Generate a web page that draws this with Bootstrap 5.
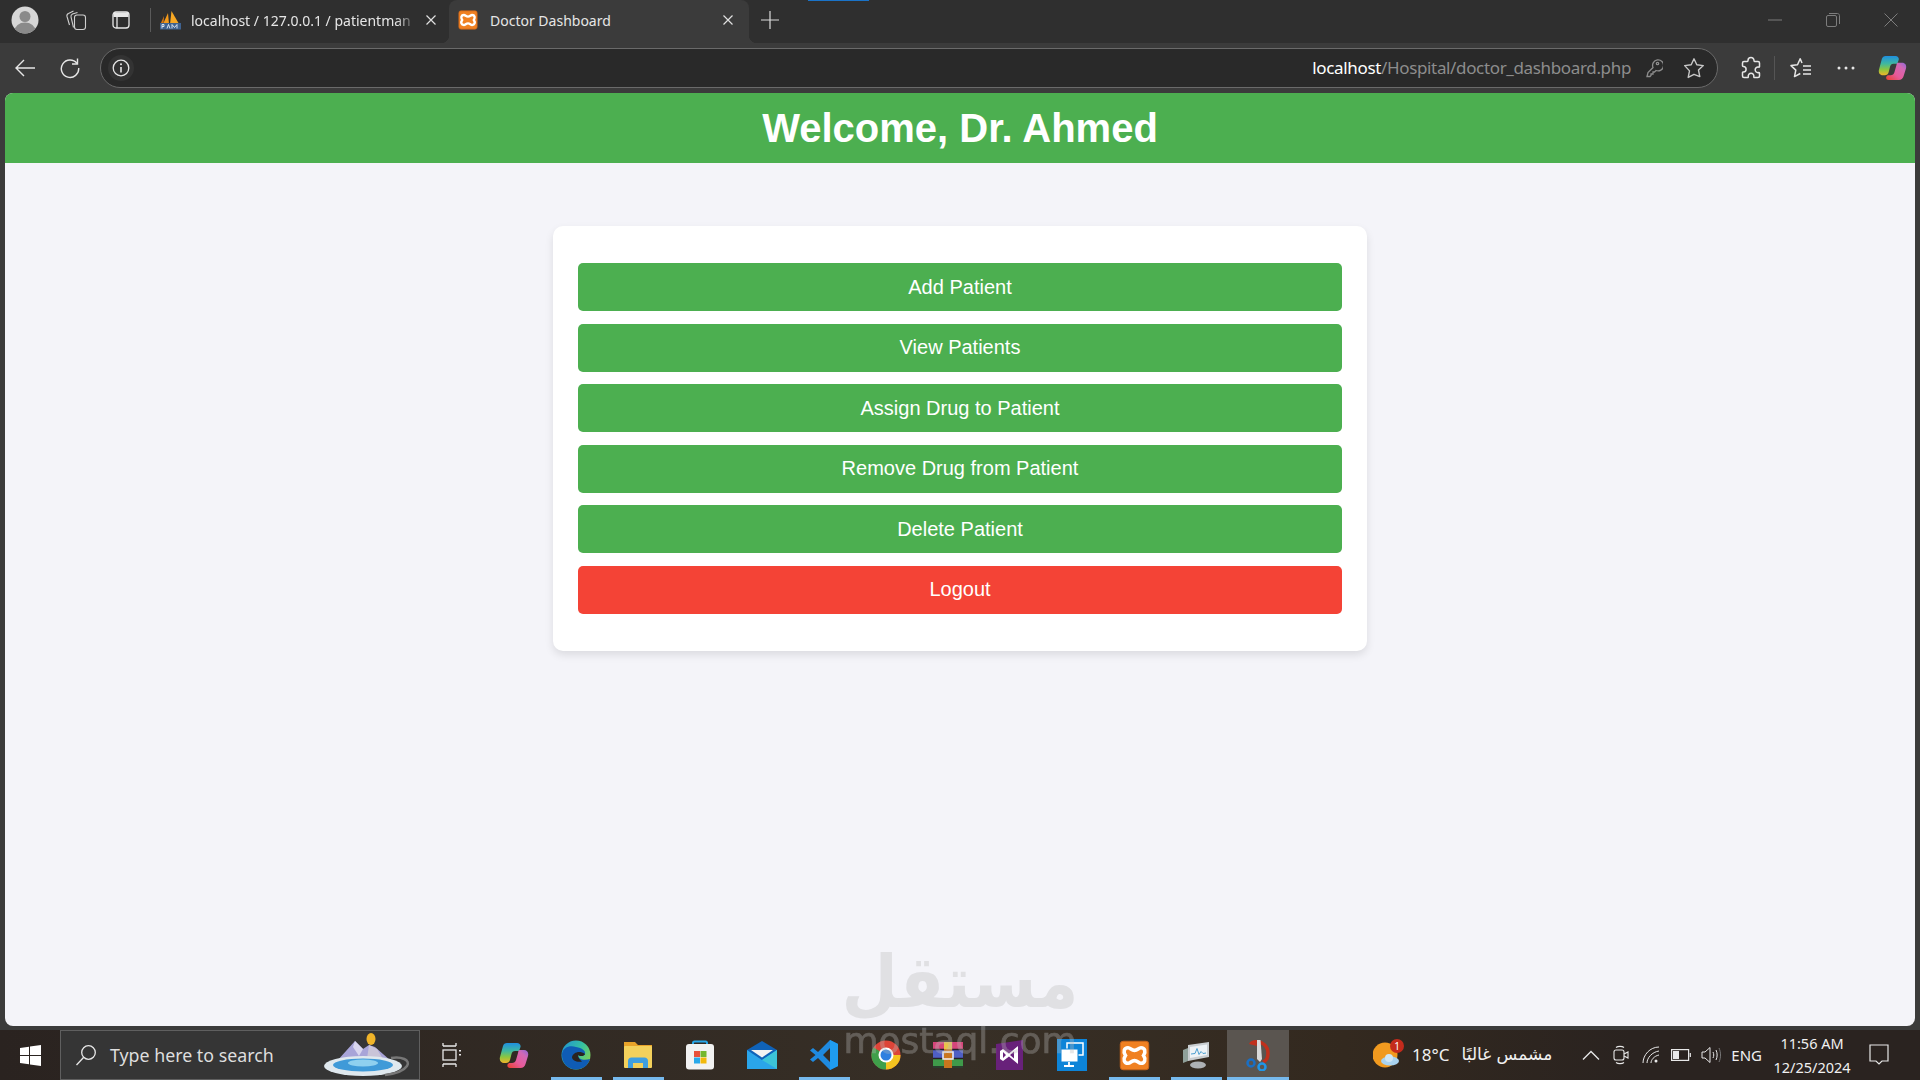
<!DOCTYPE html>
<html lang="en">
<head>
  <meta charset="UTF-8" />
  <meta name="viewport" content="width=device-width, initial-scale=1" />
  <title>Doctor Dashboard</title>
  <link href="https://cdn.jsdelivr.net/npm/bootstrap@5.3.0/dist/css/bootstrap.min.css" rel="stylesheet" />
  <style>
    html, body { height: 100%; }
    body { overflow: hidden; background: #3b3b3b; font-family: "Liberation Sans", Arial, sans-serif; }
    .shell { height: 100vh; position: relative; }
    .ui-font { font-family: "Noto Sans", "Open Sans", sans-serif; }

    /* browser chrome */
    .tabstrip { height: 43px; background: #2f2f2f; color: #e6e6e6; font-size: 14px; padding-left: 11px; padding-bottom: 3px; }
    .strip-ico { width: 45px; }
    .strip-ico-first { width: 28px; margin-right: 14px; }
    .tab-sep { width: 1px; height: 24px; background: #5a5a5a; margin: 0 9px 0 7px; }
    .tabitem { height: 43px; padding-bottom: 3px; margin-bottom: -3px; }
    .tab-one { width: 289px; padding-right: 12px; }
    .tab-two { width: 300px; background: #3b3b3b; border-radius: 8px 8px 0 0; padding-left: 9px; padding-right: 11px; position: relative; }
    .tab-two::before, .tab-two::after { content: ""; position: absolute; bottom: 0; width: 8px; height: 8px; }
    .tab-two::before { left: -8px; background: radial-gradient(circle at 0 0, #2f2f2f 8px, #3b3b3b 8.500px); }
    .tab-two::after { right: -8px; background: radial-gradient(circle at 100% 0, #2f2f2f 8px, #3b3b3b 8.500px); }
    .tab-title { flex: 1; white-space: nowrap; margin-left: 12px; }
    .tab-one .tab-title { margin-left: 10px; -webkit-mask-image: linear-gradient(90deg, #000 205px, transparent 226px); mask-image: linear-gradient(90deg, #000 205px, transparent 226px); }
    .newtab { width: 42px; }
    .winbtn { width: 58px; }
    .winctl { margin-left: auto; }
    .loadbar { position: absolute; top: 0; left: 808px; width: 61px; height: 1px; background: #1a73c8; }
    .toolbar { height: 50px; background: #3b3b3b; padding-left: 2px; }
    .tool-ico { width: 45px; }
    .tool-ico-wide { width: 48px; }
    .tool-ico-ext { width: 46px; }
    .addressbar { width: 1618px; height: 40px; margin-left: 8px; background: #292929; border: 1px solid #6a6a6a; border-radius: 20px; padding: 0 3px 0 7px; }
    .info-ico { width: 26px; height: 26px; border-radius: 50%; background: #333; }
    .urlbox { margin-left: auto; font-size: 17px; color: #8d8d8d; margin-right: 3px; letter-spacing: -.35px; }
    .urlbox b { font-weight: 400; color: #fff; }
    .addr-ico { width: 40px; }
    .toolbar-right { margin-left: 10px; }
    .tool-sep { width: 1px; height: 24px; background: #555; margin-right: 2px; }

    /* page inside the browser */
    .viewport { flex: 1; margin: 0 5px 4px; background: #f4f4f9; border-radius: 8px; overflow: hidden; }
    .page-head { height: 70px; background: #4caf50; color: #fff; }
    .page-head h1 { font-size: 40px; font-weight: 700; margin: 0; }
    .menu-card { width: 814px; margin: 63px auto 0; padding: 37px 25px; background: #fff; border-radius: 10px; box-shadow: 0 4px 8px rgba(0,0,0,.1); gap: 12.5px; }
    .menu-btn { height: 48px; border: 0; border-radius: 5px; background: #4caf50; color: #fff; font-size: 20px; padding: 0 0 1px; }
    .menu-btn:hover { background: #4caf50; color: #fff; }
    .menu-btn-red, .menu-btn-red:hover { background: #f44336; }

    /* windows taskbar */
    .taskbar { height: 50px; background: linear-gradient(90deg, #2a2320, #372f26 50%, #33291f 70%, #2a2320 85%); color: #f0f0f0; }
    .startbtn { width: 60px; }
    .searchbox { width: 360px; height: 50px; margin-right: 1px; background: #353535; border: 1px solid #5f5f5f; padding-left: 14px; font-size: 17.800px; color: #dedede; }
    .searchbox span { margin-left: 13px; }
    .search-art { margin-left: auto; margin-right: 6px; }
    .taskcell { width: 62px; height: 50px; position: relative; }
    .taskcell.open::after { content: ""; position: absolute; left: 6px; right: 5px; bottom: 0; height: 3px; background: #76b9ed; }
    .taskcell.active { background: #5a5550; }
    .taskcell.active::after { left: 0; right: 0; }
    .tray { margin-left: auto; margin-right: 17px; font-size: 17px; }
    .tray-arabic { margin: 0 24px 0 12px; font-size: 17px; font-family: "DejaVu Sans", sans-serif; }
    .tray-ico { width: 30px; }
    .tray-lang { font-size: 15px; margin: 0 7px 0 5px; }
    .tray-clock { font-size: 14.500px; line-height: 24px; text-align: center; width: 86px; }
    .tray-note { width: 48px; }
    .notif-dot { position: absolute; top: -2px; right: -3px; width: 14px; height: 14px; border-radius: 50%; background: #c42b1c; color: #fff; font-size: 10px; line-height: 14px; text-align: center; }
    .weather { width: 28px; height: 28px; margin-right: 11px; }

    /* site watermark */
    .watermark { position: absolute; left: 0; right: 0; top: 942px; text-align: center; color: rgb(186,186,186); opacity: .34; pointer-events: none; font-family: "DejaVu Sans", sans-serif; }
    .wm-ar { font-weight: 700; font-size: 72px; line-height: 80px; transform: scaleX(.9); }
    .wm-en { font-size: 36px; line-height: 38px; -webkit-text-stroke: .7px rgb(186,186,186); }
  </style>
</head>
<body>
<svg width="0" height="0" class="position-absolute">
  <defs>
    <linearGradient id="copA" x1="0" y1="0" x2="0" y2="1"><stop offset="0" stop-color="#1f8fe0" /><stop offset=".4" stop-color="#3fb8a0" /><stop offset=".7" stop-color="#8cc63f" /><stop offset="1" stop-color="#f0b429" /></linearGradient>
    <linearGradient id="copB" x1="0" y1="1" x2="1" y2="0"><stop offset="0" stop-color="#e8402a" /><stop offset=".4" stop-color="#e85a9a" /><stop offset=".75" stop-color="#d268b4" /><stop offset="1" stop-color="#8a68d8" /></linearGradient>
    <symbol id="xampp" viewBox="0 0 24 24">
      <rect x="1" y="1" width="22" height="22" rx="2.500" fill="#f08122" stroke="#c8641a" stroke-width=".8" />
      <path d="M7 6C9 6 9.500 8 12 8S15 6 17 6C20 6 21 9 19 12C21 15 20 18 17 18C15 18 14.500 16 12 16S9 18 7 18C4 18 3 15 5 12C3 9 4 6 7 6Z" fill="none" stroke="#fff" stroke-width="2.800" />
    </symbol>
    <symbol id="copilot" viewBox="0 0 30 27">
      <path d="M8 1h10c2.500 0 4 2 3.500 4L20 9h-4c-2 0-3 1-3.500 3L11 18c-.5 2-2 3-4 3H5C2 21 0 18.500 1 15L4 4c.5-2 2-3 4-3z" fill="url(#copA)" />
      <path d="M20 8h5c3 0 5 2.500 4 6l-2.500 8c-.7 2.500-2.500 4-5 4H11c-2 0-3-1.500-2.500-3.500L10 21h3c2 0 3.500-1 4-3l2-7c.3-1.500.5-2.500 1-3z" fill="url(#copB)" />
    </symbol>
  </defs>
</svg>

<div class="shell d-flex flex-column">
  <div class="loadbar"></div>

  <!-- tab strip -->
  <div class="tabstrip d-flex align-items-center ui-font">
    <div class="strip-ico-first d-flex justify-content-center">
      <svg width="28" height="28" viewBox="0 0 28 28"><defs><clipPath id="av"><circle cx="14" cy="14" r="13.500" /></clipPath></defs><circle cx="14" cy="14" r="13.500" fill="#d6d6d6" /><g clip-path="url(#av)"><circle cx="14" cy="10.500" r="5.500" fill="#8a8a8a" /><ellipse cx="14" cy="25" rx="10.500" ry="8.500" fill="#8a8a8a" /></g></svg>
    </div>
    <div class="strip-ico d-flex justify-content-center">
      <svg width="22" height="22" viewBox="0 0 22 22" fill="none" stroke="#cfcfcf" stroke-width="1.100"><rect x="9.500" y="6" width="11" height="14.500" rx="2.500" /><path d="M8.500 18.500L6 8c-.3-1.500.3-2.500 1.500-3l5-1.500" /><path d="M4.500 16L2 7.500C1.600 6 2.200 5 3.500 4.500L8.500 2" /></svg>
    </div>
    <div class="strip-ico d-flex justify-content-center">
      <svg width="18" height="18" viewBox="0 0 18 18" fill="none" stroke="#e8e8e8" stroke-width="1.300"><rect x="1" y="1" width="16" height="16" rx="3" /><path d="M1.500 1.500h15v4.500h-15z" fill="#e8e8e8" stroke="none" /><path d="M5 6v11" /></svg>
    </div>
    <div class="tab-sep"></div>
    <div class="tabitem tab-one d-flex align-items-center">
      <svg width="21" height="20" viewBox="0 0 21 20" class="flex-shrink-0"><path d="M3 14L8 3l1 11z" fill="#f49a1a" /><path d="M10 14l1.500-13L19 14z" fill="#f7a823" /><path d="M.5 14L4 6l-.5 8z" fill="#d9770f" /><rect x="0" y="13" width="21" height="6.500" fill="#3f628f" /><path d="M2 18.500v-4h2v2H2M7 18.500l1.500-4 1.500 4M12 18.500v-4l2.500 3 2.500-3v4" stroke="#e4ecf7" stroke-width=".9" fill="none" /></svg>
      <div class="tab-title">localhost / 127.0.0.1 / patientman</div>
      <svg width="12" height="12" viewBox="0 0 12 12" class="flex-shrink-0" stroke="#e0e0e0" stroke-width="1.200"><path d="M1.500 1.500l9 9M10.500 1.500l-9 9" /></svg>
    </div>
    <div class="tabitem tab-two d-flex align-items-center">
      <svg width="20" height="20" class="flex-shrink-0"><use href="#xampp" /></svg>
      <div class="tab-title">Doctor Dashboard</div>
      <svg width="12" height="12" viewBox="0 0 12 12" class="flex-shrink-0 me-1" stroke="#e0e0e0" stroke-width="1.200"><path d="M1.500 1.500l9 9M10.500 1.500l-9 9" /></svg>
    </div>
    <div class="newtab d-flex justify-content-center">
      <svg width="18" height="18" viewBox="0 0 18 18" stroke="#dcdcdc" stroke-width="1.200"><path d="M9 0v18M0 9h18" /></svg>
    </div>
    <div class="winctl d-flex align-items-center">
      <div class="winbtn d-flex justify-content-center"><svg width="14" height="14" viewBox="0 0 14 14" stroke="#7d7d7d" stroke-width="1"><path d="M0 7h14" /></svg></div>
      <div class="winbtn d-flex justify-content-center"><svg width="14" height="14" viewBox="0 0 14 14" fill="none" stroke="#7d7d7d" stroke-width="1"><rect x=".5" y="2.500" width="10" height="11" rx="1.500" /><path d="M3 .5h8.500c1 0 2 1 2 2V11" /></svg></div>
      <div class="winbtn d-flex justify-content-center"><svg width="14" height="14" viewBox="0 0 14 14" stroke="#7d7d7d" stroke-width="1"><path d="M.5.5l13 13M13.500.5l-13 13" /></svg></div>
    </div>
  </div>

  <!-- address row -->
  <div class="toolbar d-flex align-items-center ui-font">
    <div class="tool-ico d-flex justify-content-center">
      <svg width="22" height="20" viewBox="0 0 22 20" fill="none" stroke="#e6e6e6" stroke-width="1.400"><path d="M21 10H2M10 2l-8 8 8 8" /></svg>
    </div>
    <div class="tool-ico d-flex justify-content-center">
      <svg width="22" height="22" viewBox="0 0 22 22" fill="none" stroke="#e6e6e6" stroke-width="1.400"><path d="M18 6.500A8.700 8.700 0 1 0 19.700 11" /><path d="M18.500 1.500v5.500H13" /></svg>
    </div>
    <div class="addressbar d-flex align-items-center">
      <div class="info-ico d-flex align-items-center justify-content-center">
        <svg width="18" height="18" viewBox="0 0 18 18" fill="none" stroke="#e6e6e6" stroke-width="1.300"><circle cx="9" cy="9" r="7.800" /><path d="M9 8v5.500" stroke-width="1.600" /><circle cx="9" cy="5.300" r="1" fill="#e6e6e6" stroke="none" /></svg>
      </div>
      <div class="urlbox"><b>localhost</b>/Hospital/doctor_dashboard.php</div>
      <div class="addr-ico d-flex justify-content-center">
        <svg width="18" height="20" viewBox="0 0 18 20" fill="none" stroke="#8d8d8d" stroke-width="1.300"><path d="M2 18.500l1-4 5-5a5.500 5.500 0 1 1 3 3l-1.500 1.500H8v2H6v1.500l-1 1z" /><circle cx="12.500" cy="5.500" r="1.200" /></svg>
      </div>
      <div class="addr-ico d-flex justify-content-center">
        <svg width="22" height="22" viewBox="0 0 22 22" fill="none" stroke="#c8c8c8" stroke-width="1.400"><path d="M11 1.800l2.800 6 6.500.8-4.800 4.500 1.300 6.500L11 17.300l-5.800 3.100 1.300-6.500L1.700 8.600l6.500-.8z" stroke-linejoin="round" /></svg>
      </div>
    </div>
    <div class="toolbar-right d-flex align-items-center">
      <div class="tool-ico-ext d-flex justify-content-center">
        <svg width="22" height="24" viewBox="0 0 22 24" fill="none" stroke="#e6e6e6" stroke-width="1.500"><path d="M8 4.500a3 3 0 0 1 6 0c0 .7 0 1 .5 1H18c1 0 1.500.8 1.500 1.500v3.500c0 .5-.5.7-1 .6a2.800 2.800 0 1 0 0 5.500c.5 0 1 .2 1 .7V20c0 1-.7 1.500-1.500 1.500h-3.500c-.5 0-.8-.4-.7-1a2.800 2.800 0 1 0-5.500 0c.1.6-.2 1-.7 1H4c-1 0-1.500-.7-1.500-1.500v-3.300c0-.5.300-.7.800-.6a2.800 2.800 0 1 0 0-5.600c-.5 0-.8-.2-.8-.7V7c0-1 .7-1.500 1.500-1.500h3.300c.5 0 .7-.4.700-1z" /></svg>
      </div>
      <div class="tool-sep"></div>
      <div class="tool-ico d-flex justify-content-center">
        <svg width="24" height="22" viewBox="0 0 24 22" fill="none" stroke="#e6e6e6" stroke-width="1.500"><path d="M14 6l-1.800-4.200-2.700 6-6.500.8 4.800 4.500-1.300 6.500 5.800-3.100" stroke-linejoin="round" /><path d="M15 9h8M15 13h8M15 17h8" /></svg>
      </div>
      <div class="tool-ico-wide d-flex justify-content-center">
        <svg width="18" height="4" viewBox="0 0 18 4" fill="#e6e6e6"><circle cx="2" cy="2" r="1.500" /><circle cx="9" cy="2" r="1.500" /><circle cx="16" cy="2" r="1.500" /></svg>
      </div>
      <div class="tool-ico d-flex justify-content-center"><svg width="29" height="26"><use href="#copilot" /></svg></div>
    </div>
  </div>

  <!-- the page itself -->
  <div class="viewport">
    <header class="page-head d-flex align-items-center justify-content-center">
      <h1>Welcome, Dr. Ahmed</h1>
    </header>
    <div class="menu-card d-flex flex-column">
      <button class="btn menu-btn">Add Patient</button>
      <button class="btn menu-btn">View Patients</button>
      <button class="btn menu-btn">Assign Drug to Patient</button>
      <button class="btn menu-btn">Remove Drug from Patient</button>
      <button class="btn menu-btn">Delete Patient</button>
      <button class="btn menu-btn menu-btn-red">Logout</button>
    </div>
  </div>

  <!-- taskbar -->
  <div class="taskbar d-flex align-items-center ui-font">
    <div class="startbtn d-flex justify-content-center">
      <svg width="21" height="21" viewBox="0 0 21 21" fill="#fff"><path d="M0 3l9-1.300V10H0zM10 1.500L21 0v10H10zM0 11h9v8.300L0 18zM10 11h11v10l-11-1.500z" /></svg>
    </div>
    <div class="searchbox d-flex align-items-center">
      <svg width="22" height="22" viewBox="0 0 22 22" fill="none" stroke="#e8e8e8" stroke-width="1.300"><circle cx="13.500" cy="8.500" r="6.800" /><path d="M8.500 13.500L1.500 21" /></svg>
      <span>Type here to search</span>
      <svg class="search-art" width="90" height="44" viewBox="0 0 90 44"><path d="M14 28L32 8l8 8 6-4 6 2 16 14z" fill="#a8a4d8" /><path d="M32 8l8 8-4 7-6-9z" fill="#d9d6ee" /><path d="M46 12l8 4 6 10H44z" fill="#c9c4d8" /><ellipse cx="48" cy="6" rx="4.500" ry="6" fill="#f0b429" /><ellipse cx="40" cy="33" rx="39" ry="10" fill="#dfe8ee" /><ellipse cx="40" cy="32" rx="30" ry="6.500" fill="#3f9ad8" /><ellipse cx="40" cy="30" rx="15" ry="3.500" fill="#8fd0ef" /><path d="M68 25c10-2 20 2 16 8s-14 8-22 9" fill="none" stroke="#777" stroke-width="2.500" /></svg>
    </div>
    <div class="taskcell d-flex align-items-center justify-content-center">
      <svg width="20" height="24" viewBox="0 0 20 24" fill="none" stroke="#e8e8e8" stroke-width="1.300"><path d="M1 3h13M1 21h13M1 0v3M14 0v3M1 21v3M14 21v3" /><rect x="1" y="7" width="13" height="10" /><path d="M18 7v1.500M18 11v1.500" stroke-width="2" /></svg>
    </div>
    <div class="taskcell d-flex align-items-center justify-content-center"><svg width="30" height="27"><use href="#copilot" /></svg></div>
    <div class="taskcell open d-flex align-items-center justify-content-center">
      <svg width="30" height="30" viewBox="0 0 30 30"><defs><linearGradient id="edgeg" x1="0" y1="0" x2="1" y2=".6"><stop offset="0" stop-color="#1f8fd8" /><stop offset=".6" stop-color="#35c1a0" /><stop offset="1" stop-color="#7ccf5a" /></linearGradient></defs><circle cx="15" cy="15" r="14.500" fill="url(#edgeg)" /><path d="M1 14C2 7 9 5 15 7c6 1 10 4 9 7-1 2-5 2-7 1 0 4 5 6 12 4-2 7-8 10.500-14 10.500C7 29.500 .5 23 1 14z" fill="#0f5cb5" /><path d="M11 17c1-4 7-7 13-3 0 2-5 3-7 1 0 3 2 5 4 6.500-5 1-10-1-10-4.500z" fill="#2a2320" /></svg>
    </div>
    <div class="taskcell open d-flex align-items-center justify-content-center">
      <svg width="30" height="28" viewBox="0 0 30 28"><path d="M1 1h11l3 3h14v5H1z" fill="#e8a32a" /><rect x="1" y="5" width="28" height="22" rx="1" fill="#f3d15c" /><path d="M5 27v-7c0-2 1.500-3.500 3.500-3.500h13c2 0 3.500 1.500 3.500 3.500v7h-5v-5H10v5z" fill="#3f9fe0" /></svg>
    </div>
    <div class="taskcell d-flex align-items-center justify-content-center">
      <svg width="30" height="30" viewBox="0 0 30 30"><path d="M8 6V3c0-1 .8-1.500 1.500-1.500h11c.8 0 1.500.5 1.500 1.500v3" fill="none" stroke="#28a8ea" stroke-width="2" /><rect x="1" y="4" width="28" height="25.500" rx="3" fill="#f2f2f2" /><rect x="9" y="11" width="6" height="6" fill="#e8503a" /><rect x="15.500" y="11" width="6" height="6" fill="#74b72e" /><rect x="9" y="17.500" width="6" height="6" fill="#28a8ea" /><rect x="15.500" y="17.500" width="6" height="6" fill="#f2b90c" /></svg>
    </div>
    <div class="taskcell d-flex align-items-center justify-content-center">
      <svg width="30" height="28" viewBox="0 0 30 28"><path d="M0 9L15 0l15 9v19H0z" fill="#0f62b8" /><path d="M0 9l15 10L30 9v19H0z" fill="#2aa5ea" /><path d="M15 19L30 9v19z" fill="#3cc4d8" /><path d="M4 9h22l-11 7.500z" fill="#f2f2f2" /></svg>
    </div>
    <div class="taskcell open d-flex align-items-center justify-content-center">
      <svg width="30" height="30" viewBox="0 0 30 30"><path d="M21 0l8 4v22l-8 4L9 18l-5 4-3-2.500L6.500 15 1 10.500 4 8l5 4zM21 8l-7 7 7 7z" fill="#1f8ae0" fill-rule="evenodd" /><path d="M21 0l8 4v22l-8 4z" fill="#1f9cf0" /><path d="M21 0L9 12 4 8l5 4z" fill="#0f6fc2" /></svg>
    </div>
    <div class="taskcell d-flex align-items-center justify-content-center">
      <svg width="30" height="30" viewBox="0 0 30 30"><circle cx="15" cy="15" r="14.500" fill="#dd4438" /><path d="M15 15L2.500 7.500A14.500 14.500 0 0 0 15 29.500z" fill="#3f9f4a" /><path d="M15 15h14.500A14.500 14.500 0 0 1 15 29.500z" fill="#f4c31f" /><circle cx="15" cy="15" r="7.500" fill="#fff" /><circle cx="15" cy="15" r="5.500" fill="#2f7fe0" /></svg>
    </div>
    <div class="taskcell d-flex align-items-center justify-content-center">
      <svg width="30" height="26" viewBox="0 0 30 26"><rect y="0" width="30" height="8" fill="#d6457a" /><rect y="8" width="30" height="9" fill="#4f5fc4" /><rect y="17" width="30" height="9" fill="#3f9a4a" /><path d="M0 7.500h30M0 16.500h30M0 25h30" stroke="#262026" stroke-width="1.500" /><rect x="11" y="0" width="8" height="26" fill="#c9761e" /><rect x="11" y="0" width="8" height="7" fill="#e8c24a" /><rect x="10" y="10" width="10" height="7" fill="none" stroke="#f4f4f4" stroke-width="1.500" /></svg>
    </div>
    <div class="taskcell d-flex align-items-center justify-content-center">
      <svg width="30" height="32" viewBox="0 0 30 32"><path d="M1 5L28 1v30H1z" fill="#68217a" /><path d="M23 7v18L14 17.500 8 22l-3-2V12l3-2 6 4.500zM8 13v6l3-3zM19 12.500l-4 3.500 4 3.500z" fill="#fff" fill-rule="evenodd" /></svg>
    </div>
    <div class="taskcell d-flex align-items-center justify-content-center">
      <svg width="30" height="32" viewBox="0 0 30 32"><rect width="30" height="32" fill="#0d84d8" /><rect x="10" y="4" width="16" height="12" fill="none" stroke="#fff" stroke-width="1.500" /><rect x="4" y="10" width="17" height="13" fill="#fff" stroke="#0d84d8" stroke-width="1" /><path d="M12 23v3M7 27h10" stroke="#fff" stroke-width="1.800" /></svg>
    </div>
    <div class="taskcell open d-flex align-items-center justify-content-center"><svg width="31" height="31"><use href="#xampp" /></svg></div>
    <div class="taskcell open d-flex align-items-center justify-content-center">
      <svg width="28" height="28" viewBox="0 0 28 28"><path d="M6 4l21-3v15L6 20z" fill="#c9ced1" /><path d="M8 6l17-2.500v10.500L8 17z" fill="#eef3f6" /><path d="M9 13l4-.5 2-5 2 6 2-3 2 2 3-.5" fill="none" stroke="#4a9ed0" stroke-width="1" /><ellipse cx="16" cy="24" rx="8" ry="3.500" fill="#aeb2b5" /><path d="M1 9l5-2v13l-5 2z" fill="#8fa09a" /></svg>
    </div>
    <div class="taskcell open active d-flex align-items-center justify-content-center">
      <svg width="26" height="32" viewBox="0 0 26 32"><path d="M10 3c7-1 13 4 13 11 0 5-2 8-5 9" fill="none" stroke="#c0301c" stroke-width="3.500" /><path d="M11 1c-3 0-6 1-7 4l8 2z" fill="#c0301c" /><path d="M12 1h3.500L17 20l-2 3-3-3z" fill="#d9d9d9" /><circle cx="6" cy="24" r="3.500" fill="none" stroke="#1a6fc4" stroke-width="2.500" /><circle cx="17" cy="28" r="3.500" fill="none" stroke="#1f96e8" stroke-width="2.500" /></svg>
    </div>

    <div class="tray d-flex align-items-center">
      <div class="weather position-relative">
        <svg width="28" height="28" viewBox="0 0 28 28"><circle cx="12" cy="14" r="12.500" fill="#f19a1f" /><ellipse cx="17" cy="20" rx="9" ry="4.500" fill="#a9d3ef" /><circle cx="16" cy="17" r="4" fill="#cfe6f5" /></svg>
        <span class="notif-dot">1</span>
      </div>
      <span>18°C</span>
      <span class="tray-arabic" dir="rtl" lang="ar">مشمس غالبًا</span>
      <div class="tray-ico d-flex justify-content-center">
        <svg width="18" height="10" viewBox="0 0 18 10" fill="none" stroke="#e8e8e8" stroke-width="1.300"><path d="M1 9.500l8-8 8 8" /></svg>
      </div>
      <div class="tray-ico d-flex justify-content-center">
        <svg width="16" height="20" viewBox="0 0 16 20" fill="none" stroke="#e8e8e8" stroke-width="1.100"><rect x="1" y="5" width="10" height="10" rx="2" /><path d="M11 9l4-2v6l-4-2M3 2.500c2-1.500 6-1.500 8 0M3 17.500c2 1.500 6 1.500 8 0" /></svg>
      </div>
      <div class="tray-ico d-flex justify-content-center">
        <svg width="18" height="18" viewBox="0 0 18 18" fill="none" stroke="#e8e8e8" stroke-width="1"><path d="M1 17C1 9 8 1 17 1M5 17c0-5 5-11 12-12M9 17c0-3 3-7 8-8" /><circle cx="14" cy="15" r="1.500" fill="#e8e8e8" stroke="none" /></svg>
      </div>
      <div class="tray-ico d-flex justify-content-center">
        <svg width="20" height="12" viewBox="0 0 20 12" fill="none" stroke="#e8e8e8" stroke-width="1.200"><rect x=".6" y=".6" width="17" height="10.800" /><rect x="2" y="2" width="6" height="8" fill="#e8e8e8" stroke="none" /><path d="M19.300 4v4" /></svg>
      </div>
      <div class="tray-ico d-flex justify-content-center">
        <svg width="20" height="18" viewBox="0 0 20 18" fill="none" stroke="#e8e8e8" stroke-width="1"><path d="M1 6h3l5-4.500v15L4 12H1z" /><path d="M12 6c1 2 1 4 0 6M15 4c1.500 3 1.500 7 0 10" /><path d="M18 2c2 4 2 10 0 14" stroke="#777" /></svg>
      </div>
      <span class="tray-lang">ENG</span>
      <div class="tray-clock">11:56 AM<br />12/25/2024</div>
      <div class="tray-note d-flex justify-content-center">
        <svg width="20" height="22" viewBox="0 0 20 22" fill="none" stroke="#e8e8e8" stroke-width="1.200"><path d="M1 1h18v16h-6l-3 3-3-3H1z" /></svg>
      </div>
    </div>
  </div>

  <div class="watermark">
    <div class="wm-ar" dir="rtl" lang="ar">مستقل</div>
    <div class="wm-en">mostaql.com</div>
  </div>
</div>
<script src="https://cdn.jsdelivr.net/npm/bootstrap@5.3.0/dist/js/bootstrap.bundle.min.js"></script>
</body>
</html>
